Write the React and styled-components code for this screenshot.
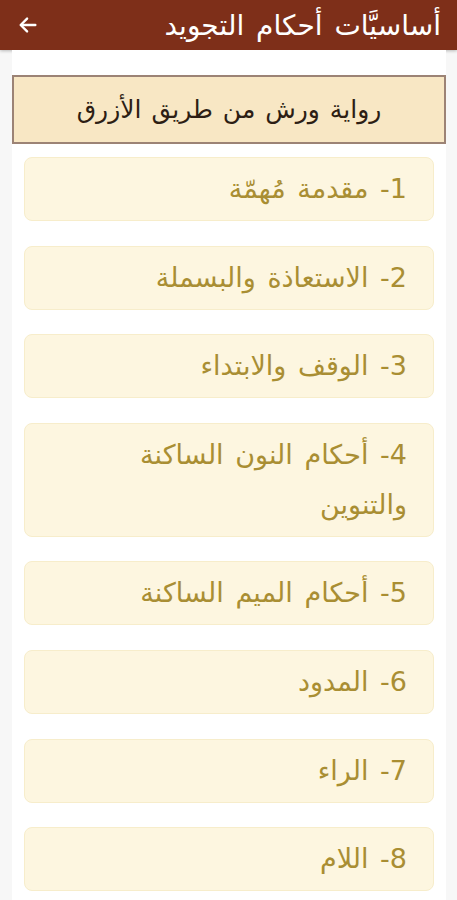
import React from 'react';
import styled, { createGlobalStyle } from 'styled-components';

const GlobalStyle = createGlobalStyle`
  body {
    margin: 0;
    background: #f7f7f7;
    font-family: 'DejaVu Sans', 'Noto Sans', sans-serif;
  }
`

const Screen = styled.div`
  width: 457px;
  height: 900px;
  overflow: hidden;
  direction: rtl;
`

const TopBar = styled.div`
  height: 50px;
  background: #7e2f19;
  display: flex;
  align-items: center;
  justify-content: space-between;
  padding: 0 16px 0 17px;
  box-sizing: border-box;
  box-shadow: 0 1px 3px rgba(0,0,0,0.25);
`

const Title = styled.h1`
  margin: 0;
  color: #ffffff;
  font-size: 28px;
  font-weight: normal;
  word-spacing: 3px;
`

const BackButton = styled.button`
  background: none;
  border: none;
  padding: 0;
  display: flex;
  align-items: center;
  cursor: pointer;
`

const Panel = styled.div`
  margin: 0 11px 0 12px;
  background: #ffffff;
  padding: 25px 0 0 0;
  min-height: 850px;
`

const Banner = styled.div`
  height: 69px;
  box-sizing: border-box;
  background: #f8e7c4;
  border: 2px solid #9c8375;
  display: flex;
  align-items: center;
  justify-content: center;
  color: #2d1e14;
  font-size: 25px;
  word-spacing: 2px;
  margin-bottom: 13px;
`

const List = styled.div`
  display: flex;
  flex-direction: column;
  gap: 24.6px;
  padding: 0 12px;
`

const Card = styled.div`
  background: #fdf6e0;
  border: 1px solid #f7edcb;
  border-radius: 8px;
  padding: 6px 26px 6px 34px;
  color: #a98e33;
  font-size: 27px;
  word-spacing: 3px;
  line-height: 50px;
  text-align: right;
`

const lessons = [
  '1- مقدمة مُهمّة',
  '2- الاستعاذة والبسملة',
  '3- الوقف والابتداء',
  '4- أحكام النون الساكنة والتنوين',
  '5- أحكام الميم الساكنة',
  '6- المدود',
  '7- الراء',
  '8- اللام',
]

class App extends React.Component {
  render() {
    return (
      <Screen>
        <GlobalStyle />
        <TopBar>
          <Title>أساسيَّات أحكام التجويد</Title>
          <BackButton aria-label="back">
            <svg width="22" height="22" viewBox="0 0 24 24" fill="none" stroke="#ffffff" strokeWidth="2.6" strokeLinecap="round" strokeLinejoin="round">
              <path d="M20 12H5" />
              <path d="M11 5l-7 7 7 7" />
            </svg>
          </BackButton>
        </TopBar>
        <Panel>
          <Banner>رواية ورش من طريق الأزرق</Banner>
          <List>
            {lessons.map((item) => (
              <Card key={item}>{item}</Card>
            ))}
          </List>
        </Panel>
      </Screen>
    );
  }
}

export default App;
